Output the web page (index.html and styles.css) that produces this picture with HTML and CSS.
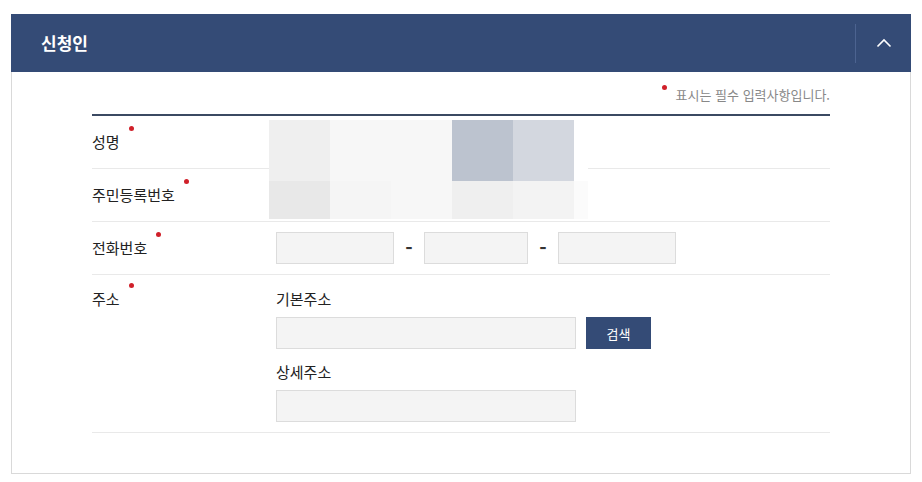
FILE: index.html
```html
<!DOCTYPE html>
<html lang="ko">
<head>
    <meta charset="UTF-8">
    <meta name="viewport" content="width=device-width, initial-scale=1.0">
    <title>신청인</title>
    <link rel="stylesheet" href="styles.css">
</head>
<body>
    <div class="panel">
        <div class="panel-head">
            <h2>신청인</h2>
            <button type="button" class="toggle" aria-label="접기">
                <svg width="16" height="10" viewBox="0 0 16 10"><path d="M1.5 8.5 L8 2 L14.5 8.5" fill="none" stroke="#fff" stroke-width="1.6"/></svg>
            </button>
        </div>
        <div class="panel-body">
            <p class="req-note"><span class="dot"></span>표시는 필수 입력사항입니다.</p>
            <div class="form-table">
                <div class="row">
                    <div class="th"><span class="req">성명</span></div>
                    <div class="td"></div>
                </div>
                <div class="row">
                    <div class="th"><span class="req">주민등록번호</span></div>
                    <div class="td"></div>
                </div>
                <div class="row">
                    <div class="th"><span class="req">전화번호</span></div>
                    <div class="td phone">
                        <input type="text" class="inp w118">
                        <span class="dash">-</span>
                        <input type="text" class="inp w104">
                        <span class="dash">-</span>
                        <input type="text" class="inp w118">
                    </div>
                </div>
                <div class="row addr">
                    <div class="th"><span class="req">주소</span></div>
                    <div class="td">
                        <div class="sub">기본주소</div>
                        <div class="line">
                            <input type="text" class="inp w300">
                            <button type="button" class="btn">검색</button>
                        </div>
                        <div class="sub second">상세주소</div>
                        <input type="text" class="inp w300">
                    </div>
                </div>

                <!-- masked personal data -->
                <div class="mosaic">
                    <i style="background:#efefef"></i><i style="background:#f7f7f7"></i><i style="background:#f7f7f7"></i><i style="background:#bcc3cf"></i><i style="background:#d3d7df"></i><i style="background:#fff"></i>
                    <i style="background:#e8e8e8"></i><i style="background:#f5f5f5"></i><i style="background:#f7f7f7"></i><i style="background:#efefef"></i><i style="background:#f3f3f3"></i><i style="background:#fbfbfb"></i>
                </div>
            </div>
        </div>
    </div>
</body>
</html>
```

FILE: styles.css
```css
body { margin: 0; background: #fff; color: #222; font-family: "Noto Sans CJK KR", "Noto Sans", sans-serif; }
.panel { width: 900px; margin: 14px 11px; }
.panel-head { height: 58px; background: #344b76; display: flex; align-items: center; justify-content: space-between; padding-left: 30px; }
.panel-head h2 { margin: 0; color: #fff; font-size: 17px; font-weight: bold; line-height: 20px; }
.toggle { width: 56px; height: 39px; border: none; border-left: 1px solid #4c6390; background: transparent; display: flex; align-items: center; justify-content: center; padding: 0; cursor: pointer; }
.panel-body { border: 1px solid #d9d9d9; border-top: none; padding: 13px 80px 40px; }
.req-note { margin: 0 0 9px; text-align: right; font-size: 13px; line-height: 20px; color: #888; }
.req-note .dot { display: inline-block; width: 5px; height: 5px; border-radius: 50%; background: #d0202a; vertical-align: top; margin: 0 9px 0 0; }
.form-table { border-top: 2px solid #3b4a62; position: relative; }
.row { display: flex; min-height: 52px; border-bottom: 1px solid #e9e9e9; }
.th { width: 184px; display: flex; align-items: center; font-size: 15px; line-height: 20px; color: #222; }
.req { position: relative; }
.req::after { content: ""; position: absolute; right: -14px; top: -6px; width: 5px; height: 5px; border-radius: 50%; background: #d0202a; }
.td { flex: 1; display: flex; align-items: center; }
.dash { width: 30px; text-align: center; font-size: 20px; line-height: 20px; font-weight: bold; color: #333; }
.inp { box-sizing: border-box; height: 32px; margin: 0; padding: 0 8px; background: #f4f4f4; border: 1px solid #dcdcdc; border-radius: 0; font-size: 14px; }
.w118 { width: 118px; }
.w104 { width: 104px; }
.w300 { width: 300px; }
.row.addr .th { align-items: flex-start; padding-top: 14px; }
.row.addr .td { flex-direction: column; align-items: flex-start; padding: 14px 0 10px; }
.sub { font-size: 15px; line-height: 20px; color: #222; margin-bottom: 8px; }
.sub.second { margin-top: 13px; }
.line { display: flex; gap: 10px; }
.btn { width: 65px; height: 32px; border: none; background: #344b76; color: #fff; font-size: 13px; font-family: inherit; padding: 0; cursor: pointer; }
.mosaic { position: absolute; left: 177px; top: 4px; display: grid; grid-template-columns: 61px 61px 61px 61px 61px 14px; grid-template-rows: 61px 38px; }
```
